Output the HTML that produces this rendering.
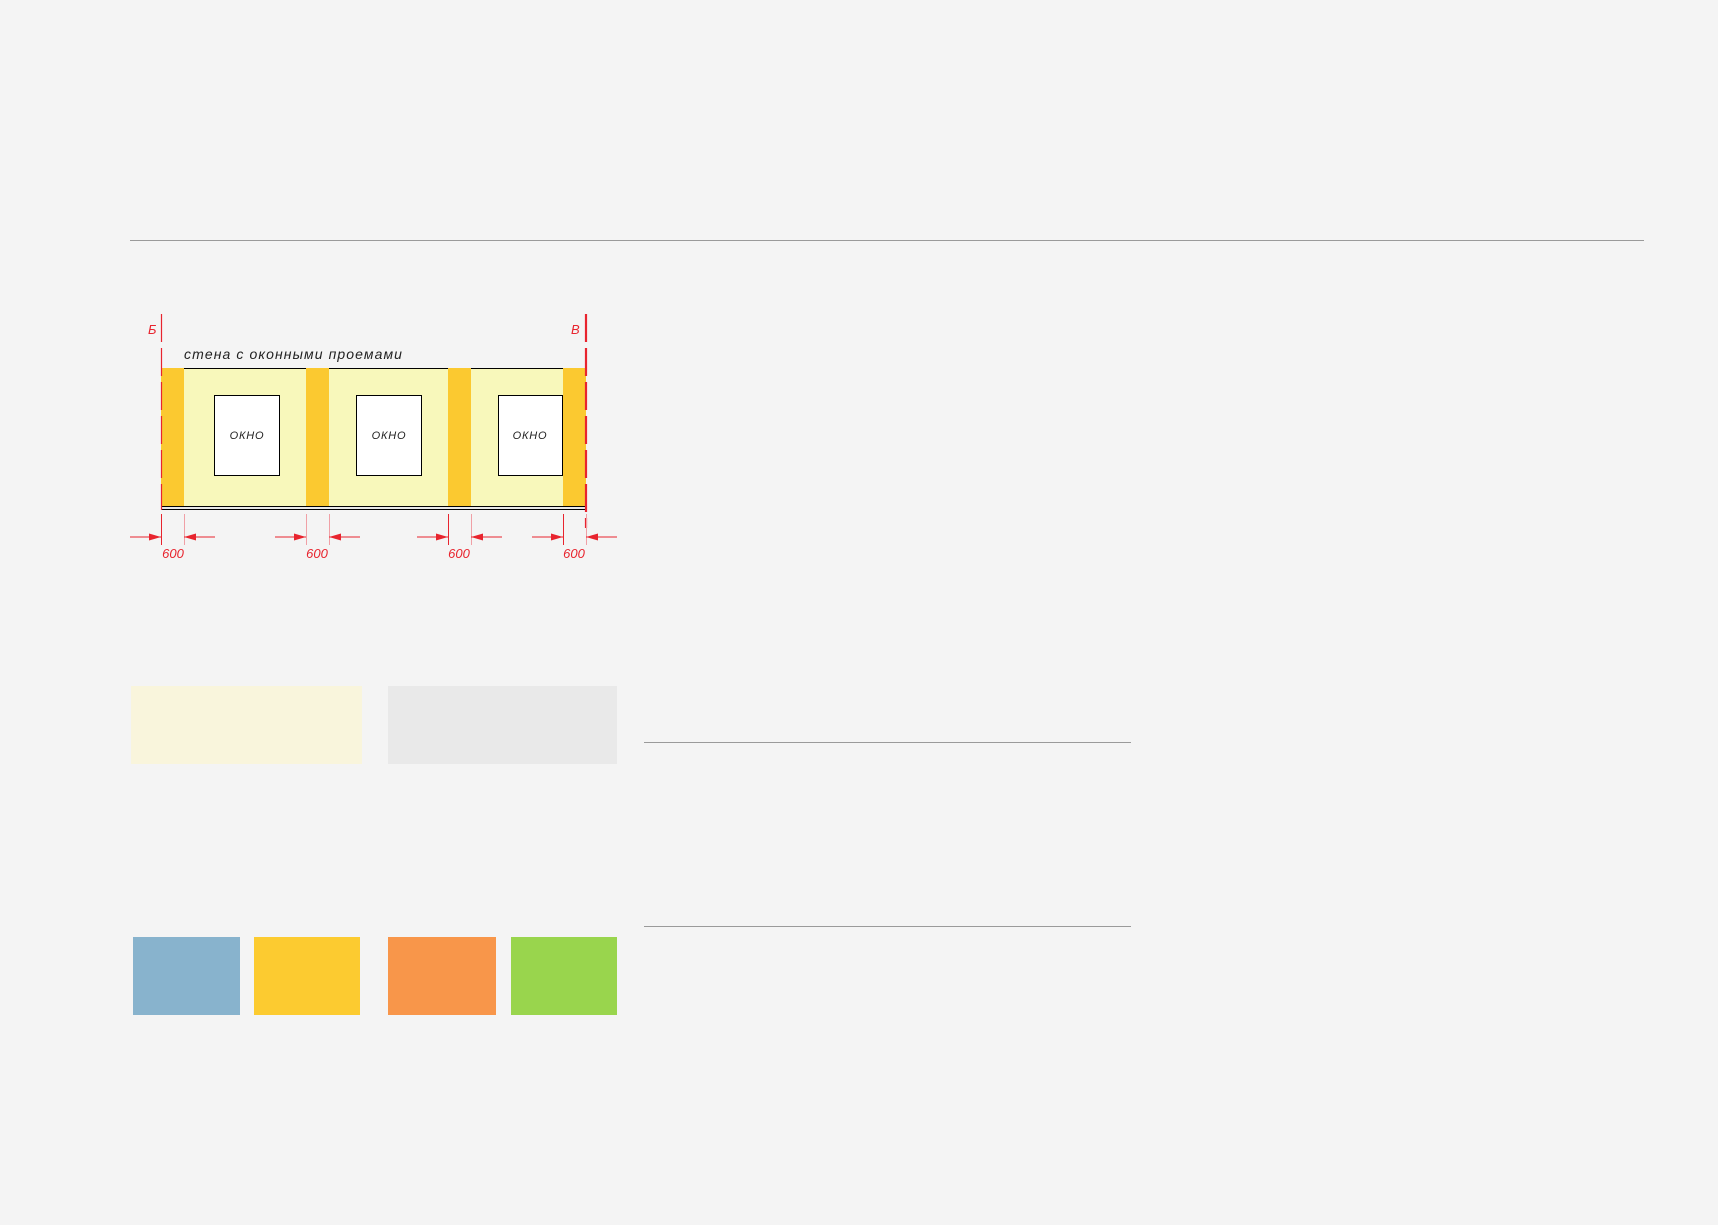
<!DOCTYPE html>
<html><head><meta charset="utf-8"><style>
html,body{margin:0;padding:0;background:#f4f4f4;width:1718px;height:1225px;overflow:hidden;position:relative;font-family:"Liberation Sans",sans-serif}
.a{position:absolute}
.ln{position:absolute;height:1px;background:#9a9a9a}
</style></head><body>
<div class="ln" style="left:130px;top:240px;width:1514px"></div>
<div class="ln" style="left:644px;top:742px;width:487px"></div>
<div class="ln" style="left:644px;top:926px;width:487px"></div>

<div class="a" style="left:131px;top:686px;width:231px;height:78px;background:#f9f5dc"></div>
<div class="a" style="left:388px;top:686px;width:229px;height:78px;background:#e9e9e9"></div>

<div class="a" style="left:133px;top:937px;width:107px;height:78px;background:#88b3cd"></div>
<div class="a" style="left:254px;top:937px;width:106px;height:78px;background:#fccb30"></div>
<div class="a" style="left:388px;top:937px;width:108px;height:78px;background:#f8964a"></div>
<div class="a" style="left:511px;top:937px;width:106px;height:78px;background:#99d54d"></div>

<svg class="a" style="left:0;top:0" width="1718" height="1225" xmlns="http://www.w3.org/2000/svg">
<rect x="161" y="368" width="425" height="138" fill="#f8f8bb"/>
<line x1="184" y1="368.5" x2="586" y2="368.5" stroke="#000" stroke-width="1"/>
<g fill="#fbc930">
<rect x="161" y="368" width="23" height="138"/>
<rect x="306" y="368" width="23" height="138"/>
<rect x="448" y="368" width="23" height="138"/>
<rect x="563" y="368" width="23" height="138"/>
</g>
<rect x="161.5" y="506.5" width="425" height="3" fill="#e8e8e8" stroke="#000" stroke-width="1"/>
<g fill="#fff" stroke="#000" stroke-width="1">
<rect x="214.5" y="395.5" width="65" height="80"/>
<rect x="356.5" y="395.5" width="65" height="80"/>
<rect x="498.5" y="395.5" width="64" height="80"/>
</g>
<g font-size="11" fill="#222" text-anchor="middle" font-style="italic" letter-spacing="0.8">
<text x="247" y="439">ОКНО</text>
<text x="389" y="439">ОКНО</text>
<text x="530" y="439">ОКНО</text>
</g>
<text x="184" y="359" font-size="14" font-style="italic" fill="#222" letter-spacing="1.1">стена с оконными проемами</text>
<line x1="161.5" y1="314" x2="161.5" y2="510" stroke="#e8242e" stroke-width="1.2" stroke-dasharray="28,6"/>
<line x1="586" y1="314" x2="586" y2="528" stroke="#e8242e" stroke-width="2.2" stroke-dasharray="28,6"/>
<text x="148" y="334" font-size="13" font-style="italic" fill="#e8242e">Б</text>
<text x="571" y="334" font-size="13" font-style="italic" fill="#e8242e">В</text>
<g stroke="#e8242e" stroke-width="1">
<line x1="161.5" y1="514" x2="161.5" y2="545"/><line x1="184.5" y1="514" x2="184.5" y2="545" stroke="#f0a0a6"/>
<line x1="306.5" y1="514" x2="306.5" y2="545" stroke="#f0a0a6"/><line x1="329.5" y1="514" x2="329.5" y2="545" stroke="#f0a0a6"/>
<line x1="448.5" y1="514" x2="448.5" y2="545"/><line x1="471.5" y1="514" x2="471.5" y2="545" stroke="#f0a0a6"/>
<line x1="563.5" y1="514" x2="563.5" y2="545"/><line x1="586.5" y1="514" x2="586.5" y2="545" stroke="#f0a0a6"/>
<line x1="130" y1="537" x2="161" y2="537"/><line x1="184" y1="537" x2="215" y2="537"/>
<line x1="275" y1="537" x2="306" y2="537"/><line x1="329" y1="537" x2="360" y2="537"/>
<line x1="417" y1="537" x2="448" y2="537"/><line x1="471" y1="537" x2="502" y2="537"/>
<line x1="532" y1="537" x2="563" y2="537"/><line x1="586" y1="537" x2="617" y2="537"/>
</g>
<g fill="#e8242e">
<path d="M161 537 l-12 -3.5 v7z"/><path d="M184 537 l12 -3.5 v7z"/>
<path d="M306 537 l-12 -3.5 v7z"/><path d="M329 537 l12 -3.5 v7z"/>
<path d="M448 537 l-12 -3.5 v7z"/><path d="M471 537 l12 -3.5 v7z"/>
<path d="M563 537 l-12 -3.5 v7z"/><path d="M586 537 l12 -3.5 v7z"/>
</g>
<g font-size="13" font-style="italic" fill="#e8242e" text-anchor="middle">
<text x="173" y="558">600</text><text x="317" y="558">600</text>
<text x="459" y="558">600</text><text x="574" y="558">600</text>
</g>
</svg>
</body></html>
